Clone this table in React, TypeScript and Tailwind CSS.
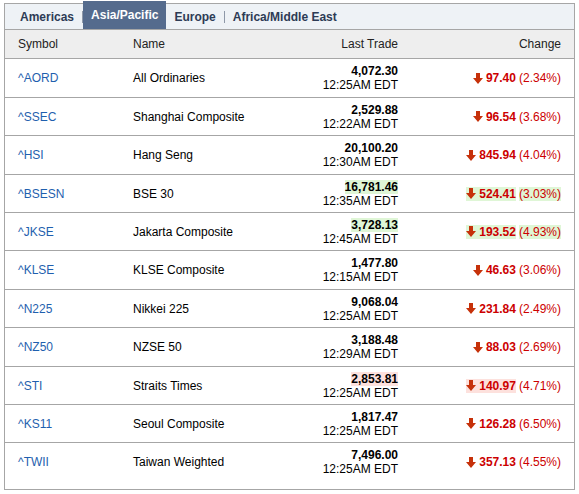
import type { ReactNode } from 'react';

type Hl = 'up' | 'down' | null;

interface Quote {
  symbol: string;
  name: string;
  price: string;
  time: string;
  change: string;
  pct: string;
  hl?: Hl;
  pctHl?: boolean;
}

const QUOTES: Quote[] = [
  { symbol: '^AORD', name: 'All Ordinaries', price: '4,072.30', time: '12:25AM EDT', change: '97.40', pct: '(2.34%)' },
  { symbol: '^SSEC', name: 'Shanghai Composite', price: '2,529.88', time: '12:22AM EDT', change: '96.54', pct: '(3.68%)' },
  { symbol: '^HSI', name: 'Hang Seng', price: '20,100.20', time: '12:30AM EDT', change: '845.94', pct: '(4.04%)' },
  { symbol: '^BSESN', name: 'BSE 30', price: '16,781.46', time: '12:35AM EDT', change: '524.41', pct: '(3.03%)', hl: 'up', pctHl: true },
  { symbol: '^JKSE', name: 'Jakarta Composite', price: '3,728.13', time: '12:45AM EDT', change: '193.52', pct: '(4.93%)', hl: 'up', pctHl: true },
  { symbol: '^KLSE', name: 'KLSE Composite', price: '1,477.80', time: '12:15AM EDT', change: '46.63', pct: '(3.06%)' },
  { symbol: '^N225', name: 'Nikkei 225', price: '9,068.04', time: '12:25AM EDT', change: '231.84', pct: '(2.49%)' },
  { symbol: '^NZ50', name: 'NZSE 50', price: '3,188.48', time: '12:29AM EDT', change: '88.03', pct: '(2.69%)' },
  { symbol: '^STI', name: 'Straits Times', price: '2,853.81', time: '12:25AM EDT', change: '140.97', pct: '(4.71%)', hl: 'down' },
  { symbol: '^KS11', name: 'Seoul Composite', price: '1,817.47', time: '12:25AM EDT', change: '126.28', pct: '(6.50%)' },
  { symbol: '^TWII', name: 'Taiwan Weighted', price: '7,496.00', time: '12:25AM EDT', change: '357.13', pct: '(4.55%)' },
];

// row heights (border included) so the rules land where the original's do
const ROW_H = ['h-[39px]', 'h-[38px]', 'h-[39px]', 'h-[38px]', 'h-[38px]', 'h-[39px]', 'h-[38px]', 'h-[39px]', 'h-[38px]', 'h-[38px]'];

function hlClass(hl?: Hl) {
  if (hl === 'up') return 'bg-[#dff6d6]';
  if (hl === 'down') return 'bg-[#fde1dd]';
  return '';
}

function DownArrow() {
  return (
    <svg width="10" height="11" viewBox="0 0 10 11" className="inline-block">
      <path d="M3 0h4v5h3l-5 6-5-6h3z" fill="#c6310a" />
    </svg>
  );
}

function Sep() {
  return <span className="h-[12px] w-px self-center bg-[#8e98a8]" />;
}

function Tab({ children, active, className = '' }: { children: ReactNode; active?: boolean; className?: string }) {
  return (
    <span
      className={`flex items-center font-bold ${
        active ? '-mt-[3px] h-[28px] bg-[#556b8d] px-[8px] text-white' : 'px-[8px] text-[#2d3b55]'
      } ${className}`}
    >
      {children}
    </span>
  );
}

export default function App() {
  return (
    <div className="min-h-[494px] bg-white pt-[3px] pl-[4px] font-['Liberation_Sans',Arial,sans-serif] text-[12px] leading-[14px] text-black">
      <div className="w-[571px] border border-[#a6a6a6]">
        <div className="flex h-[26px] items-center border-b border-[#a6a6a6] bg-[#eef2f6]">
          <Tab className="pl-[15px]">Americas</Tab>
          <Sep />
          <Tab active>Asia/Pacific</Tab>
          <Tab>Europe</Tab>
          <Sep />
          <Tab>Africa/Middle East</Tab>
        </div>

        <div className="flex h-[29px] items-center border-b border-[#a6a6a6] bg-[#eeeeee] text-[#222]">
          <div className="w-[128px] pl-[13px]">Symbol</div>
          <div className="w-[135px]">Name</div>
          <div className="w-[130px] text-right">Last Trade</div>
          <div className="flex-1 pr-[13px] text-right">Change</div>
        </div>

        {QUOTES.map((q, i) => {
          const last = i === QUOTES.length - 1;
          return (
            <div
              key={q.symbol}
              className={`flex ${last ? 'h-[46px] items-start' : `${ROW_H[i]} items-center border-b border-[#a6a6a6]`}`}
            >
              <div className={`flex w-full items-center ${last ? 'h-[38px]' : ''}`}>
                <div className="w-[128px] pl-[13px] text-[#1f5fae]">{q.symbol}</div>
                <div className="w-[135px]">{q.name}</div>
                <div className="flex w-[130px] flex-col items-end">
                  <span className={`font-bold ${hlClass(q.hl)}`}>{q.price}</span>
                  <span>{q.time}</span>
                </div>
                <div className="flex flex-1 items-center justify-end pr-[13px] text-[#cc0000]">
                  <span className={`flex items-center gap-[3px] font-bold ${hlClass(q.hl)}`}>
                    <DownArrow />
                    {q.change}
                  </span>
                  <span className={`ml-[3px] ${q.pctHl ? hlClass(q.hl) : ''}`}>{q.pct}</span>
                </div>
              </div>
            </div>
          );
        })}
      </div>
    </div>
  );
}
